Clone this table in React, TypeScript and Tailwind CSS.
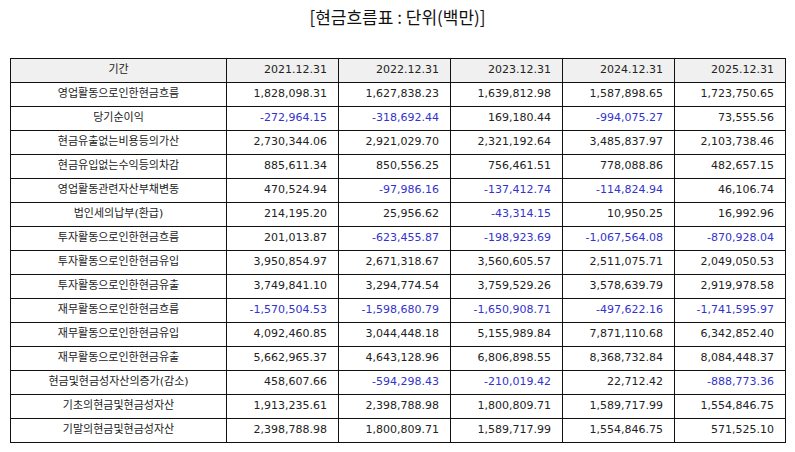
import React from "react";

const header = ["2021.12.31", "2022.12.31", "2023.12.31", "2024.12.31", "2025.12.31"];

const rows: [string, string[]][] = [
  ["영업활동으로인한현금흐름", ["1,828,098.31", "1,627,838.23", "1,639,812.98", "1,587,898.65", "1,723,750.65"]],
  ["당기순이익", ["-272,964.15", "-318,692.44", "169,180.44", "-994,075.27", "73,555.56"]],
  ["현금유출없는비용등의가산", ["2,730,344.06", "2,921,029.70", "2,321,192.64", "3,485,837.97", "2,103,738.46"]],
  ["현금유입없는수익등의차감", ["885,611.34", "850,556.25", "756,461.51", "778,088.86", "482,657.15"]],
  ["영업활동관련자산부채변동", ["470,524.94", "-97,986.16", "-137,412.74", "-114,824.94", "46,106.74"]],
  ["법인세의납부(환급)", ["214,195.20", "25,956.62", "-43,314.15", "10,950.25", "16,992.96"]],
  ["투자활동으로인한현금흐름", ["201,013.87", "-623,455.87", "-198,923.69", "-1,067,564.08", "-870,928.04"]],
  ["투자활동으로인한현금유입", ["3,950,854.97", "2,671,318.67", "3,560,605.57", "2,511,075.71", "2,049,050.53"]],
  ["투자활동으로인한현금유출", ["3,749,841.10", "3,294,774.54", "3,759,529.26", "3,578,639.79", "2,919,978.58"]],
  ["재무활동으로인한현금흐름", ["-1,570,504.53", "-1,598,680.79", "-1,650,908.71", "-497,622.16", "-1,741,595.97"]],
  ["재무활동으로인한현금유입", ["4,092,460.85", "3,044,448.18", "5,155,989.84", "7,871,110.68", "6,342,852.40"]],
  ["재무활동으로인한현금유출", ["5,662,965.37", "4,643,128.96", "6,806,898.55", "8,368,732.84", "8,084,448.37"]],
  ["현금및현금성자산의증가(감소)", ["458,607.66", "-594,298.43", "-210,019.42", "22,712.42", "-888,773.36"]],
  ["기초의현금및현금성자산", ["1,913,235.61", "2,398,788.98", "1,800,809.71", "1,589,717.99", "1,554,846.75"]],
  ["기말의현금및현금성자산", ["2,398,788.98", "1,800,809.71", "1,589,717.99", "1,554,846.75", "571,525.10"]],
];

export default function App() {
  return (
    <div
      className="w-[795px] h-[452px] bg-white text-[#222222] overflow-hidden"
      style={{ fontFamily: '"DejaVu Sans", "Noto Sans CJK KR", sans-serif' }}
    >
      <div
        className="pt-[4px] h-[58px] text-center text-[17px] leading-[26px] text-[#111111]"
        style={{ fontFamily: '"Noto Sans CJK KR", sans-serif' }}
      >
        [현금흐름표 : 단위(백만)]
      </div>
      <div className="pl-[10px]">
        <table className="table-fixed border-collapse w-[775px] text-[11px]">
          <colgroup>
            <col className="w-[216px]" />
            <col className="w-[112px]" />
            <col className="w-[112px]" />
            <col className="w-[112px]" />
            <col className="w-[112px]" />
            <col className="w-[111px]" />
          </colgroup>
          <thead>
            <tr className="bg-[#f0f0f0]">
              <th className="h-[24px] p-0 border border-[#111111] font-normal text-center">기간</th>
              {header.map((h) => (
                <th key={h} className="h-[24px] p-0 pr-[11px] border border-[#111111] font-normal text-right">
                  {h}
                </th>
              ))}
            </tr>
          </thead>
          <tbody>
            {rows.map(([label, vals]) => (
              <tr key={label}>
                <td className="h-[24px] p-0 border border-[#111111] text-center">{label}</td>
                {vals.map((v, i) => (
                  <td
                    key={i}
                    className={
                      v.startsWith("-")
                        ? "h-[24px] p-0 pr-[11px] border border-[#111111] text-right text-[#3333cc]"
                        : "h-[24px] p-0 pr-[11px] border border-[#111111] text-right"
                    }
                  >
                    {v}
                  </td>
                ))}
              </tr>
            ))}
          </tbody>
        </table>
      </div>
    </div>
  );
}
